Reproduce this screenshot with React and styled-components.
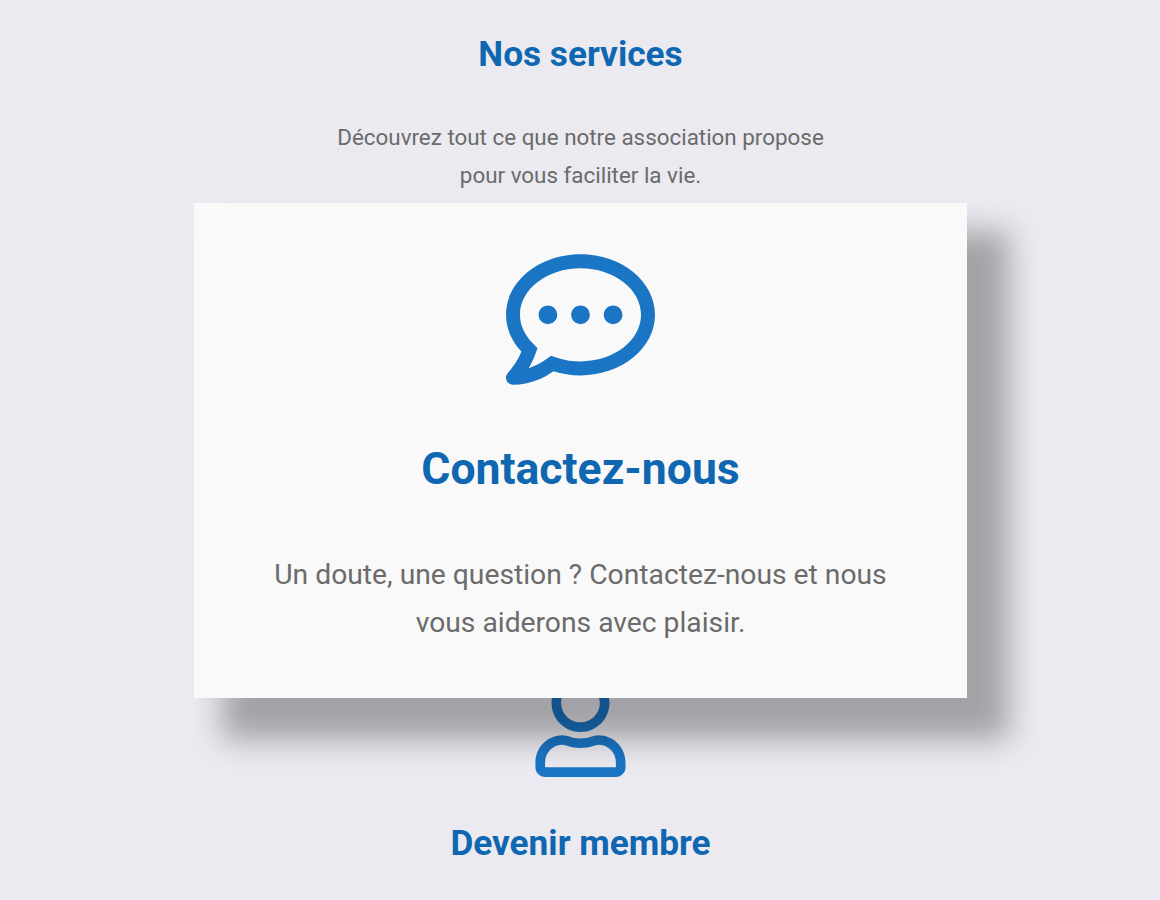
import React from "react";
import styled, { createGlobalStyle } from "styled-components";
import { FaRegCommentDots, FaRegUser } from "react-icons/fa";

const GlobalStyle = createGlobalStyle`
  * {
    box-sizing: border-box;
  }

  body {
    margin: 0;
    background-color: #eaeaf0;
    font-family: Roboto, sans-serif;
    overflow: hidden;
  }
`;

const Section = styled.section`
  width: 100%;
  height: 900px;
  padding-left: 1px;
  display: flex;
  flex-direction: column;
  align-items: center;
  text-align: center;
  overflow: hidden;
`;

const Header = styled.header`
  height: 203px;
  padding-top: 33px;
`;

const Title = styled.h2`
  margin: 0;
  font-size: ${(props) => (props.$large ? "44.5px" : "35.2px")};
  line-height: ${(props) => (props.$large ? "52px" : "42px")};
  font-weight: 700;
  color: #0f67b1;
`;

const Text = styled.p`
  margin: 0;
  font-size: ${(props) => (props.$large ? "28.25px" : "22.4px")};
  line-height: ${(props) => (props.$large ? "48px" : "38px")};
  color: #6b6b6b;
`;

const Intro = styled(Text)`
  width: 520px;
  margin-top: 43px;
`;

const Card = styled.article`
  display: flex;
  flex-direction: column;
  align-items: center;
  color: #1a75c4;
`;

const ActiveCard = styled(Card)`
  position: relative;
  z-index: 1;
  flex-shrink: 0;
  width: 773px;
  height: 495px;
  padding: 42px 70px 0;
  background-color: #f9f9f9;
  box-shadow: 35px 35px 28px 7px rgba(0, 0, 0, 0.3);

  ${Title} {
    margin-top: 49px;
  }

  ${Text} {
    margin-top: 56px;
  }
`;

const NextCard = styled(Card)`
  margin-top: -24px;

  ${Title} {
    margin-top: 45px;
  }
`;

const App = () => {
  return (
    <>
      <GlobalStyle />
      <Section>
        <Header>
          <Title>Nos services</Title>
          <Intro>
            Découvrez tout ce que notre association propose pour vous faciliter
            la vie.
          </Intro>
        </Header>
        <ActiveCard>
          <FaRegCommentDots size={149} />
          <Title $large>Contactez-nous</Title>
          <Text $large>
            Un doute, une question ? Contactez-nous et nous vous aiderons avec
            plaisir.
          </Text>
        </ActiveCard>
        <NextCard>
          <FaRegUser size={103} />
          <Title>Devenir membre</Title>
        </NextCard>
      </Section>
    </>
  );
};

export default App;
